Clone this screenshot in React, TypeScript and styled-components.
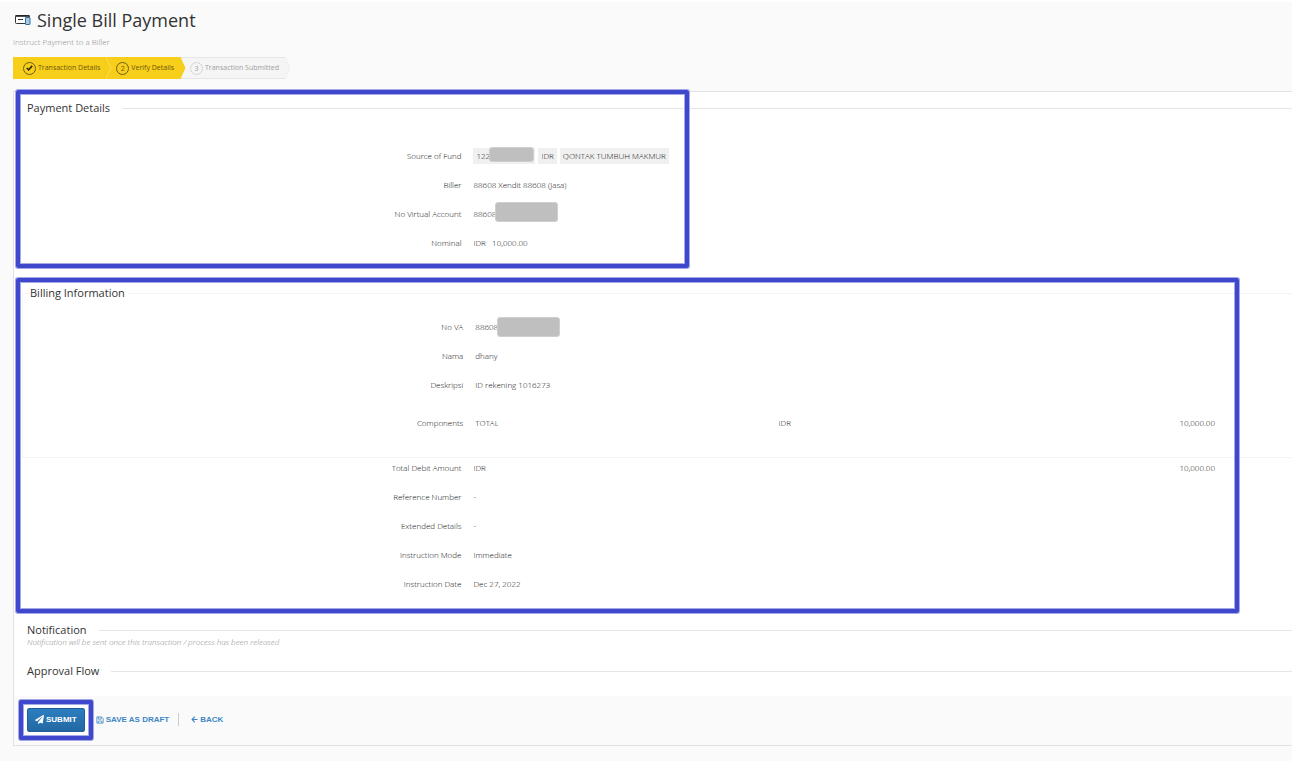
import React from "react";
import styled, { createGlobalStyle } from "styled-components";
import { FaPaperPlane, FaArrowLeft } from "react-icons/fa";

const GlobalStyle = createGlobalStyle`
  *, *::before, *::after { box-sizing: border-box; }
  body {
    margin: 0;
    background: #fafafa;
    border-top: 2px solid #ffffff;
    color: #111111;
    font-family: "Open Sans", "Liberation Sans", sans-serif;
    font-size: 8px;
    font-weight: 300;
    line-height: 16px;
    overflow-x: hidden;
  }
  h1, h2, p, dl, dd { margin: 0; }
`;

const Page = styled.div`
  padding: 0 0 15px 13px;
`;

const TitleBar = styled.header`
  display: flex;
  align-items: center;
  gap: 6px;
  padding: 5px 0 0 2px;
`;

const Title = styled.h1`
  font-size: 18px;
  line-height: 26px;
  font-weight: 400;
  color: #333333;
`;

const Subtitle = styled.p`
  margin-top: 1px;
  color: #8c8c8c;
`;

const Steps = styled.ol`
  display: flex;
  width: max-content;
  height: 22px;
  margin: 7px 0 12px;
  padding: 0;
  list-style: none;
`;

const Step = styled.li<{ $active: boolean }>`
  position: relative;
  display: flex;
  align-items: center;
  gap: 2px;
  padding: 0 6px 0 10px;
  font-size: 7px;
  font-weight: 400;
  color: ${(p) => (p.$active ? "#6b570c" : "#a0a0a0")};
  background: ${(p) => (p.$active ? "#f7cf1b" : "#f5f5f5")};
  border: solid ${(p) => (p.$active ? "#f7cf1b" : "#e6e6e6")};
  border-width: 1px 0;
`;

const StepArrow = styled.svg`
  position: absolute;
  z-index: 1;
  left: 100%;
  top: -1px;
  width: 6px;
  height: 22px;
`;

const StepMark = styled.span<{ $active: boolean }>`
  display: grid;
  place-items: center;
  width: 13px;
  height: 13px;
  border: 1px solid ${(p) => (p.$active ? "#6b5a1e" : "#d5d5d5")};
  border-radius: 50%;
  line-height: 11px;
`;

const Panel = styled.main`
  background: #ffffff;
  border: 1px solid #e2e2e2;
  border-right: 0;
`;

const Section = styled.section`
  position: relative;
  padding-left: 13px;
`;

const PaymentSection = styled(Section)`
  padding-top: 8px;
  padding-bottom: 34px;
`;

const BillingSection = styled(Section)`
  padding-bottom: 30px;
`;

const NotificationSection = styled(Section)`
  padding-bottom: 17px;
`;

const Highlight = styled.div`
  position: absolute;
  pointer-events: none;
  border: 4px solid #3f48cc;
  border-radius: 2px;
  box-shadow: 0 0 0 1px #a5a9e6, inset 0 0 0 1px #a5a9e6;
`;

const PaymentHighlight = styled(Highlight)`
  top: -2px;
  bottom: 17px;
  left: 2px;
  width: 673px;
`;

const BillingHighlight = styled(Highlight)`
  top: -7px;
  bottom: 9px;
  left: 2px;
  right: 53px;
`;

const SectionHeading = styled.h2`
  display: flex;
  align-items: center;
  gap: 12px;
  font-size: 11px;
  line-height: 16px;
  font-weight: 400;
  color: #333333;

  &::after {
    content: "";
    flex: 1;
    height: 1px;
    background: #e6e6e6;
  }
`;

const Fields = styled.dl`
  display: flex;
  flex-direction: column;
  gap: 13px;
`;

const PaymentFields = styled(Fields)`
  padding-top: 32px;
`;

const Field = styled.div`
  display: grid;
  grid-template-columns: 58fr 99fr;
  column-gap: 12px;
  padding-right: 77px;
`;

const Label = styled.dt`
  text-align: right;
`;

const Value = styled.dd`
  position: relative;
  display: flex;
`;

const AmountValue = styled(Value)`
  justify-content: space-between;
`;

const Chips = styled(Value)`
  gap: 3px;
`;

const Chip = styled.span`
  position: relative;
  padding: 0 3px;
  background: #f0f0f0;
  white-space: nowrap;
`;

const AccountChip = styled(Chip)`
  width: 62px;
`;

const Redaction = styled.span`
  position: absolute;
  left: 22px;
  top: -4px;
  width: 63px;
  height: 20px;
  background: #bfbfbf;
  border: 1px solid #cfcfcf;
  border-radius: 3px;
`;

const ChipRedaction = styled(Redaction)`
  left: 16px;
  top: -1px;
  width: 45px;
  height: 15px;
`;

const CenteredRedaction = styled(Redaction)`
  top: -2px;
`;

const BillingBox = styled.fieldset`
  margin: 0 0 2px -5px;
  padding: 0 0 26px 7px;
  border: 1px solid #f3f3f3;
  border-right: 0;
  min-width: 0;
`;

const BillingLegend = styled.legend`
  padding: 0 3px 0 0;
  font-size: 11px;
  line-height: 16px;
  font-weight: 400;
  color: #333333;
`;

const BillingFields = styled(Fields)`
  padding-top: 18px;
`;

const ComponentsField = styled(Field)`
  padding-top: 9px;
`;

const ComponentsTable = styled.table`
  width: 100%;
  table-layout: fixed;
  border-collapse: collapse;

  td {
    padding: 0;
    width: 41%;
  }
  td:last-child {
    width: auto;
    text-align: right;
  }
`;

const Note = styled.p`
  line-height: 8px;
  font-style: italic;
  color: #8c8c8c;
`;

const Footer = styled.footer`
  display: flex;
  align-items: center;
  height: 49px;
  margin-top: 17px;
  padding: 0 0 2px 5px;
  background: #fafafa;
`;

const SubmitHighlight = styled.div`
  padding: 4px;
  background: #ffffff;
  border: 4px solid #3f48cc;
  border-radius: 2px;
  box-shadow: 0 0 0 1px #a5a9e6, inset 0 0 0 1px #a5a9e6;
`;

const Button = styled.button`
  display: inline-flex;
  align-items: center;
  gap: 2px;
  padding: 0;
  border: 0;
  background: none;
  color: #3d86c6;
  font: bold 8px/16px "Liberation Sans", Arial, sans-serif;
  white-space: nowrap;
  cursor: pointer;
`;

const SubmitButton = styled(Button)`
  height: 24px;
  padding: 0 7px;
  color: #ffffff;
  background: linear-gradient(#2b7fc0, #2468a2);
  border: 1px solid #1f5f96;
  border-radius: 2px;
`;

const Actions = styled.div`
  display: flex;
  align-items: center;
  padding-left: 3px;
`;

const Divider = styled.span`
  width: 1px;
  height: 13px;
  margin: 0 12px 0 9px;
  background: #cccccc;
`;

const BillIcon = () => (
  <svg width="16" height="12" viewBox="0 0 16 12" aria-hidden="true">
    <rect x="0.5" y="1.5" width="14" height="8" rx="1" fill="#fff" stroke="#333" />
    <path d="M0.5 2H14.5" stroke="#222" strokeWidth="1.6" />
    <path d="M3 5.5H8" stroke="#333" />
    <rect x="10.5" y="3.5" width="4.5" height="7" rx="0.5" fill="#a9c8e0" stroke="#2f6fa5" />
  </svg>
);

const SaveIcon = () => (
  <svg width="8" height="8" viewBox="0 0 8 8" aria-hidden="true" fill="none" stroke="currentColor">
    <path d="M0.9 0.9H5.6L7.1 2.4V7.1H0.9Z" strokeWidth="0.8" />
    <path d="M2.4 1V3.1H5.2V1" strokeWidth="0.8" />
    <path d="M2.3 7V5H5.7V7" strokeWidth="0.7" />
  </svg>
);

const CheckMark = () => (
  <svg width="7" height="6" viewBox="0 0 7 6" aria-label="Done">
    <path d="M0.8 3L2.6 4.8L6.2 0.9" fill="none" stroke="#2f2a12" strokeWidth="1.6" />
  </svg>
);

interface StepItem {
  mark: React.ReactNode;
  text: string;
  active: boolean;
  fill: string;
  edge: string;
}

const steps: StepItem[] = [
  { mark: <CheckMark />, text: "Transaction Details", active: true, fill: "#f7cf1b", edge: "#f9dc55" },
  { mark: "2", text: "Verify Details", active: true, fill: "#f7cf1b", edge: "#f7cf1b" },
  { mark: "3", text: "Transaction Submitted", active: false, fill: "#f5f5f5", edge: "#eeeeee" },
];

interface FieldRowProps {
  label: string;
  children: React.ReactNode;
}

const FieldRow = ({ label, children }: FieldRowProps) => (
  <Field>
    <Label>{label}</Label>
    <Value>{children}</Value>
  </Field>
);

export default function App() {
  return (
    <>
      <GlobalStyle />
      <Page>
        <TitleBar>
          <BillIcon />
          <Title>Single Bill Payment</Title>
        </TitleBar>
        <Subtitle>Instruct Payment to a Biller</Subtitle>
        <Steps>
          {steps.map((s) => (
            <Step key={s.text} $active={s.active}>
              <StepMark $active={s.active}>{s.mark}</StepMark>
              {s.text}
              <StepArrow viewBox="0 0 6 22" aria-hidden="true">
                <path d="M0 0L5 11L0 22Z" fill={s.fill} />
                <path d="M0 0L5 11L0 22" fill="none" stroke={s.edge} />
              </StepArrow>
            </Step>
          ))}
        </Steps>

        <Panel>
          <PaymentSection>
            <SectionHeading>Payment Details</SectionHeading>
            <PaymentFields>
              <Field>
                <Label>Source of Fund</Label>
                <Chips>
                  <AccountChip>
                    122
                    <ChipRedaction />
                  </AccountChip>
                  <Chip>IDR</Chip>
                  <Chip>QONTAK TUMBUH MAKMUR</Chip>
                </Chips>
              </Field>
              <FieldRow label="Biller">88608 Xendit 88608 (Jasa)</FieldRow>
              <FieldRow label="No Virtual Account">
                88608
                <Redaction />
              </FieldRow>
              <FieldRow label="Nominal">IDR &nbsp; 10,000.00</FieldRow>
            </PaymentFields>
            <PaymentHighlight />
          </PaymentSection>

          <BillingSection>
            <BillingBox>
              <BillingLegend>Billing Information</BillingLegend>
              <BillingFields>
                <FieldRow label="No VA">
                  88608
                  <CenteredRedaction />
                </FieldRow>
                <FieldRow label="Nama">dhany</FieldRow>
                <FieldRow label="Deskripsi">ID rekening 1016273</FieldRow>
                <ComponentsField>
                  <Label>Components</Label>
                  <Value>
                    <ComponentsTable>
                      <tbody>
                        <tr>
                          <td>TOTAL</td>
                          <td>IDR</td>
                          <td>10,000.00</td>
                        </tr>
                      </tbody>
                    </ComponentsTable>
                  </Value>
                </ComponentsField>
              </BillingFields>
            </BillingBox>
            <Fields>
              <Field>
                <Label>Total Debit Amount</Label>
                <AmountValue>
                  <span>IDR</span>
                  <span>10,000.00</span>
                </AmountValue>
              </Field>
              <FieldRow label="Reference Number">-</FieldRow>
              <FieldRow label="Extended Details">-</FieldRow>
              <FieldRow label="Instruction Mode">Immediate</FieldRow>
              <FieldRow label="Instruction Date">Dec 27, 2022</FieldRow>
            </Fields>
            <BillingHighlight />
          </BillingSection>

          <NotificationSection>
            <SectionHeading>Notification</SectionHeading>
            <Note>Notification will be sent once this transaction / process has been released</Note>
          </NotificationSection>
          <Section>
            <SectionHeading>Approval Flow</SectionHeading>
          </Section>

          <Footer>
            <SubmitHighlight>
              <SubmitButton type="submit">
                <FaPaperPlane size={9} />
                SUBMIT
              </SubmitButton>
            </SubmitHighlight>
            <Actions>
              <Button type="button">
                <SaveIcon />
                SAVE AS DRAFT
              </Button>
              <Divider />
              <Button type="button">
                <FaArrowLeft size={7} />
                BACK
              </Button>
            </Actions>
          </Footer>
        </Panel>
      </Page>
    </>
  );
}
